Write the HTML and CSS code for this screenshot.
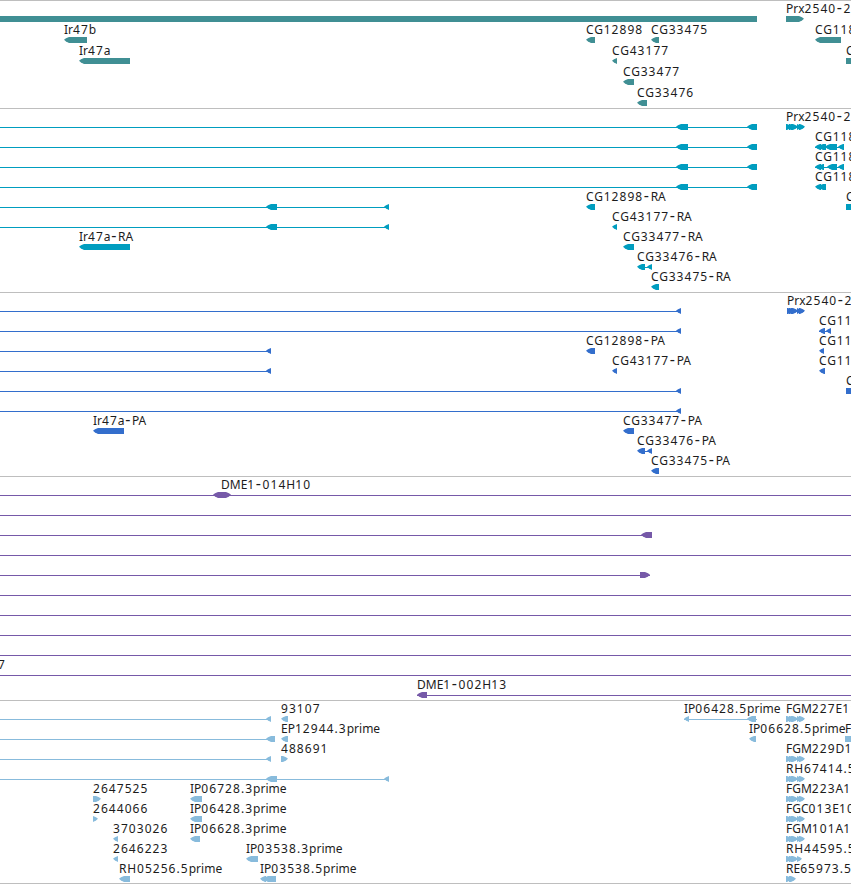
FILE: index.html
```html
<!DOCTYPE html>
<html lang="en">

<head>
  <meta charset="UTF-8">
  <meta name="viewport" content="width=device-width, initial-scale=1.0">
  <title>Genome browser</title>

  <link rel="stylesheet" href="styles.css">
</head>

<body>
  <div id="tracks" class="tracks"></div>

  <script src="tracks.js"></script>
</body>

</html>
```
FILE: styles.css
```css
* {
  padding: 0;
  margin: 0;
}

body {
  background-color: white;
  overflow: hidden;
}

.tracks {
  display: flex;
  flex-direction: column;
  width: 851px;
  border-bottom: 1px solid #bebebe;
}

.track {
  border-top: 1px solid #bebebe;
}

.track svg {
  display: block;
  overflow: hidden;
}

.label {
  font-family: 'Noto Sans', 'Open Sans', sans-serif;
  font-size: 12px;
  fill: #1c1c1c;
}

.label .digits {
  letter-spacing: 1.05px;
}

.label .wide {
  letter-spacing: 0.8px;
}

.label .dash {
  font-size: 16px;
  letter-spacing: 1.6px;
}

.gene {
  fill: #408f94;
}

.transcript {
  fill: #009dbf;
}

.protein {
  fill: #336ecc;
}

.clone {
  fill: #7659a8;
}

.est {
  fill: #88bbdc;
}
```
FILE: tracks.js
```js
// row: { label, x, line: [start, end], parts: [[start, end, direction]] }
// direction is '<', '>', '<>' or '' for a plain block
var WIDTH = 851;

function f(row, label, x, parts, line) {
  return { row: row, label: label, x: x, parts: parts || [], line: line };
}

var prx = [[786, 792, '>'], [789, 795, '>'], [791, 798, '>'], [797, 802, '>'], [799, 805, '>']];
var longExons = [[676, 688, '<'], [747, 757, '<']];
var midExons = [[266, 277, '<'], [384, 389, '<']];

var tracks = [
  { type: 'gene', height: 107, step: 21, items: [
    f(0, '', 0, [[0, 757, '']]),
    f(0, 'Prx2540-2', 786, [[786, 804, '>']]),
    f(1, 'Ir47b', 64, [[64, 87, '<']]),
    f(1, 'CG12898', 586, [[586, 595, '<']]),
    f(1, 'CG33475', 651, [[651, 659, '<']]),
    f(1, 'CG11825', 815, [[815, 841, '<']]),
    f(2, 'Ir47a', 79, [[79, 130, '<']]),
    f(2, 'CG43177', 612, [[612, 617, '<']]),
    f(2, 'CG', 846, [[846, 860, '']]),
    f(3, 'CG33477', 623, [[623, 634, '<']]),
    f(4, 'CG33476', 637, [[637, 647, '<']])
  ] },
  { type: 'transcript', height: 183, step: 20, items: [
    f(0, '', 0, longExons, [0, 757]),
    f(1, '', 0, longExons, [0, 757]),
    f(2, '', 0, longExons, [0, 757]),
    f(3, '', 0, longExons, [0, 757]),
    f(0, 'Prx2540-2', 786, prx, [786, 804]),
    f(1, 'CG11825', 815, [[815, 821, '<'], [818, 826, '<'], [825, 837, '<'], [838, 844, '<']], [815, 843]),
    f(2, 'CG11825', 815, [[815, 821, '<'], [818, 824, '<'], [827, 837, '<'], [838, 844, '<']], [815, 843]),
    f(3, 'CG11825', 815, [[815, 821, '<'], [818, 826, '<']]),
    f(4, 'CG12898-RA', 586, [[586, 595, '<']]),
    f(4, '', 0, midExons, [0, 388]),
    f(4, 'CG', 846, [[846, 860, '']]),
    f(5, '', 0, midExons, [0, 388]),
    f(5, 'CG43177-RA', 612, [[612, 617, '<']]),
    f(6, 'Ir47a-RA', 79, [[79, 130, '<']]),
    f(6, 'CG33477-RA', 623, [[623, 634, '<']]),
    f(7, 'CG33476-RA', 637, [[637, 645, '<'], [647, 652, '<']], [640, 651]),
    f(8, 'CG33475-RA', 651, [[651, 659, '<']])
  ] },
  { type: 'protein', height: 183, step: 20, items: [
    f(0, '', 0, [[676, 681, '<']], [0, 680]),
    f(1, '', 0, [[676, 681, '<']], [0, 680]),
    f(2, '', 0, [[266, 271, '<']], [0, 270]),
    f(3, '', 0, [[266, 271, '<']], [0, 270]),
    f(4, '', 0, [[676, 681, '<']], [0, 680]),
    f(5, '', 0, [[676, 681, '<']], [0, 680]),
    f(0, 'Prx2540-2', 787, [[787, 793, '>'], [789, 795, '>'], [791, 798, '>'], [797, 802, '>'], [799, 805, '>']], [787, 804]),
    f(1, 'CG11825', 819, [[819, 825, '<'], [826, 831, '<']], [819, 830]),
    f(2, 'CG11825', 819, [[819, 824, '<']]),
    f(3, 'CG11825', 819, [[819, 825, '<']]),
    f(2, 'CG12898-PA', 586, [[586, 595, '<']]),
    f(3, 'CG43177-PA', 612, [[612, 617, '<']]),
    f(4, 'CG', 846, [[846, 860, '']]),
    f(6, 'Ir47a-PA', 93, [[93, 124, '<']]),
    f(6, 'CG33477-PA', 623, [[623, 634, '<']]),
    f(7, 'CG33476-PA', 637, [[637, 645, '<'], [647, 652, '<']], [640, 651]),
    f(8, 'CG33475-PA', 651, [[651, 659, '<']])
  ] },
  { type: 'clone', height: 223, step: 20, items: [
    f(0, 'DME1-014H10', 221, [[213, 231, '<>']], [0, WIDTH]),
    f(1, '', 0, [], [0, WIDTH]),
    f(2, '', 0, [[641, 652, '<']], [0, 652]),
    f(3, '', 0, [], [0, WIDTH]),
    f(4, '', 0, [[640, 650, '>']], [0, 650]),
    f(5, '', 0, [], [0, WIDTH]),
    f(6, '', 0, [], [0, WIDTH]),
    f(7, '', 0, [], [0, WIDTH]),
    f(8, '', 0, [], [0, WIDTH]),
    f(9, '7', -2, [], [0, WIDTH]),
    f(10, 'DME1-002H13', 417, [[417, 427, '<']], [417, WIDTH])
  ] },
  { type: 'est', height: 182, step: 20, items: [
    f(0, '', 0, [[266, 271, '<']], [0, 270]),
    f(1, '', 0, [[266, 275, '<']], [0, 270]),
    f(2, '', 0, [[266, 271, '<']], [0, 270]),
    f(3, '', 0, midExons, [0, 388]),
    f(0, '93107', 281, [[281, 288, '<']]),
    f(1, 'EP12944.3prime', 281, [[281, 288, '<']]),
    f(2, '488691', 281, [[281, 288, '>']]),
    f(0, 'IP06428.5prime', 684, [[684, 689, '<'], [747, 756, '<']], [684, 757]),
    f(1, 'IP06628.5prime', 749, [[749, 756, '<']]),
    f(1, 'FGM', 845, [[845, 860, '']]),
    f(0, 'FGM227E11', 786, prx, [786, 804]),
    f(2, 'FGM229D12', 786, prx, [786, 804]),
    f(3, 'RH67414.5prime', 786, prx, [786, 804]),
    f(4, 'FGM223A11', 786, prx, [786, 804]),
    f(5, 'FGC013E10', 786, prx, [786, 804]),
    f(6, 'FGM101A11', 786, prx, [786, 804]),
    f(7, 'RH44595.5prime', 786, [[786, 792, '>'], [789, 795, '>'], [791, 798, '>'], [797, 802, '>']], [786, 801]),
    f(8, 'RE65973.5prime', 786, [[786, 792, '>'], [789, 796, '>']]),
    f(4, '2647525', 93, [[93, 101, '>']]),
    f(5, '2644066', 93, [[93, 98, '>']]),
    f(6, '3703026', 113, [[113, 118, '<']]),
    f(7, '2646223', 113, [[113, 118, '<']]),
    f(8, 'RH05256.5prime', 119, [[119, 130, '<']]),
    f(4, 'IP06728.3prime', 190, [[190, 202, '<']]),
    f(5, 'IP06428.3prime', 190, [[190, 202, '<']]),
    f(6, 'IP06628.3prime', 190, [[190, 200, '<']]),
    f(7, 'IP03538.3prime', 246, [[246, 258, '<']]),
    f(8, 'IP03538.5prime', 260, [[260, 266, '<'], [263, 276, '<']])
  ] }
];

// the heads are slightly rounded, so each side gets an extra point
function drawPart(part, top) {
  var x1 = part[0];
  var x2 = part[1];
  var left = x1;
  var right = x2;
  var mid = top + 2.8;
  var points = [];

  if (part[2].indexOf('<') >= 0) {
    left = x1 + 5;
    points.push([x1 + 2, top + 4.5], [x1, mid], [x1 + 2, top + 1.2]);
  }
  points.unshift([left, top + 6]);
  points.push([left, top]);

  if (part[2].indexOf('>') >= 0) {
    right = x2 - 5;
  }
  points.push([right, top]);
  if (right < x2) {
    points.push([x2 - 2, top + 1.2], [x2, mid], [x2 - 2, top + 4.5]);
  }
  points.push([right, top + 6]);

  return '<polygon points="' + points.join(' ') + '"/>';
}

function drawLabel(item, baseline) {
  var text = item.label
    .replace(/[0-9.]+/g, '<tspan class="digits">$&</tspan>')
    .replace(/^(CG|RH)/, '<tspan class="wide">$1</tspan>')
    .replace(/-/g, '<tspan class="dash" dx="0.6">-</tspan>');

  return '<text class="label" x="' + item.x + '" y="' + baseline + '">' + text + '</text>';
}

function drawTrack(track) {
  var html = '';

  track.items.forEach(function (item) {
    var top = item.row * track.step;

    if (item.line) {
      html += '<rect x="' + item.line[0] + '" y="' + (top + 18) + '" width="' + (item.line[1] - item.line[0]) + '" height="1"/>';
    }
    item.parts.forEach(function (part) {
      html += drawPart(part, top + 15);
    });
    if (item.label) {
      html += drawLabel(item, top + 12);
    }
  });

  return '<div class="track"><svg class="' + track.type + '" width="' + WIDTH + '" height="' + track.height + '">' + html + '</svg></div>';
}

document.getElementById('tracks').innerHTML = tracks.map(drawTrack).join('');
```
